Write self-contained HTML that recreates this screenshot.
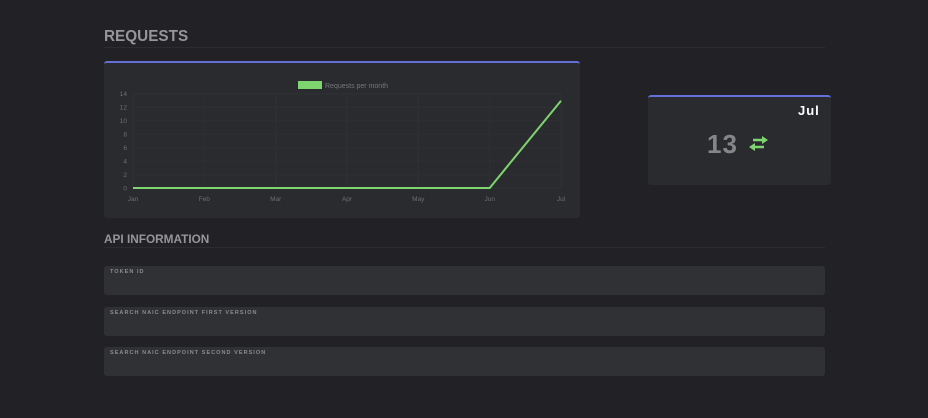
<!DOCTYPE html>
<html><head><style>
body{margin:0;width:928px;height:418px;background:#222226;font-family:"Liberation Sans",sans-serif;position:relative;overflow:hidden}
.a{position:absolute}
h1{position:absolute;margin:0;color:#95959a;font-weight:bold;}
.hr{position:absolute;left:104px;width:721px;height:1px;background:#2c2c31}
.card{position:absolute;background:#2a2b2f;border-top:2px solid #6470d8;border-radius:3px}
.inp{position:absolute;left:104px;width:721px;height:29px;background:#303135;border-radius:3px}
.inp span{position:absolute;left:6px;top:3px;font-size:5.5px;letter-spacing:1.05px;color:#8c8c90;font-weight:bold}
</style></head><body>
<h1 style="left:104px;top:28px;font-size:15.3px">REQUESTS</h1>
<div class="hr" style="top:47px"></div>
<div class="card" style="left:104px;top:61px;width:476px;height:155px"></div>
<svg class="a" style="left:0;top:0" width="928" height="418">
<rect x="298" y="81" width="24" height="8" fill="#7ed46f"/>
<text x="325" y="88" font-size="7" fill="#76767b" font-family="Liberation Sans">Requests per month</text>
<g stroke="#303034" stroke-width="1">
<line x1="133" y1="94" x2="561" y2="94"/><line x1="133" y1="107.4" x2="561" y2="107.4"/><line x1="133" y1="120.9" x2="561" y2="120.9"/><line x1="133" y1="134.3" x2="561" y2="134.3"/><line x1="133" y1="147.7" x2="561" y2="147.7"/><line x1="133" y1="161.1" x2="561" y2="161.1"/><line x1="133" y1="174.6" x2="561" y2="174.6"/><line x1="133" y1="188" x2="561" y2="188"/>
<line x1="133" y1="94" x2="133" y2="188"/><line x1="204.3" y1="94" x2="204.3" y2="188"/><line x1="275.7" y1="94" x2="275.7" y2="188"/><line x1="347" y1="94" x2="347" y2="188"/><line x1="418.3" y1="94" x2="418.3" y2="188"/><line x1="489.7" y1="94" x2="489.7" y2="188"/><line x1="561" y1="94" x2="561" y2="188"/>
</g>
<g font-size="6.5" fill="#6e6e73" font-family="Liberation Sans" text-anchor="end">
<text x="127" y="96">14</text><text x="127" y="109.5">12</text><text x="127" y="123">10</text><text x="127" y="136.5">8</text><text x="127" y="150">6</text><text x="127" y="163.5">4</text><text x="127" y="177">2</text><text x="127" y="190.5">0</text>
</g>
<g font-size="6.5" fill="#6e6e73" font-family="Liberation Sans" text-anchor="middle">
<text x="133" y="201">Jan</text><text x="204.3" y="201">Feb</text><text x="275.7" y="201">Mar</text><text x="347" y="201">Apr</text><text x="418.3" y="201">May</text><text x="489.7" y="201">Jun</text><text x="561" y="201">Jul</text>
</g>
<polyline points="133,188 489.7,188 561,100.7" fill="none" stroke="#7ed46f" stroke-width="2"/>
</svg>
<div class="card" style="left:648px;top:95px;width:183px;height:88px"></div>
<div class="a" style="left:798px;top:103px;font-size:13px;font-weight:bold;color:#fff;letter-spacing:1px">Jul</div>
<div class="a" style="left:707px;top:129px;font-size:26px;font-weight:bold;color:#86868a;letter-spacing:1px">13</div>
<svg class="a" style="left:748px;top:135px" width="22" height="18"><g stroke="#7ed46f" stroke-width="2.5" fill="#7ed46f"><line x1="5" y1="5" x2="15" y2="5"/><path d="M14 1 L20 5 L14 9Z" stroke="none"/><line x1="6" y1="12" x2="16" y2="12"/><path d="M7 8 L1 12 L7 16Z" stroke="none"/></g></svg>
<h1 style="left:104px;top:232px;font-size:11.8px">API INFORMATION</h1>
<div class="hr" style="top:247px"></div>
<div class="inp" style="top:266px"><span>TOKEN ID</span></div>
<div class="inp" style="top:307px"><span>SEARCH NAIC ENDPOINT FIRST VERSION</span></div>
<div class="inp" style="top:347px"><span>SEARCH NAIC ENDPOINT SECOND VERSION</span></div>
</body></html>
